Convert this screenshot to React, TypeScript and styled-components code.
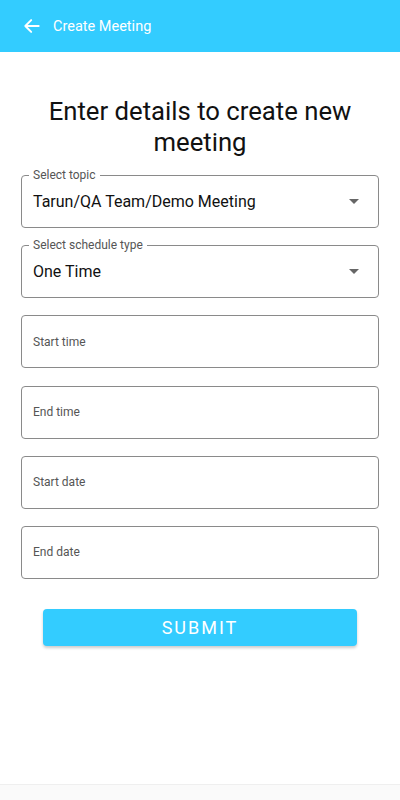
import React from "react";
import styled, { createGlobalStyle } from "styled-components";

const Global = createGlobalStyle`
  html, body { margin: 0; padding: 0; background: #fafafa; }
  body { font-family: Roboto, "Noto Sans", sans-serif; }
  * { box-sizing: border-box; }
`;

const Screen = styled.div`
  width: 400px;
  height: 800px;
  display: flex;
  flex-direction: column;
  background: #fafafa;
`;

const Header = styled.header`
  height: 52px;
  background: #33ccff;
  display: flex;
  align-items: center;
  padding-left: 22px;
  gap: 11px;
  color: #fff;
  font-size: 14.5px;
`;

const Body = styled.main`
  height: 733px;
  background: #fff;
  border-bottom: 1px solid #efefef;
  display: flex;
  flex-direction: column;
  align-items: center;
  padding: 44px 21px 0;
`;

const Title = styled.h1`
  margin: 0 0 17px;
  font-weight: 400;
  font-size: 25.7px;
  line-height: 31px;
  color: #111;
  text-align: center;
  width: 320px;
`;

const Fields = styled.div`
  width: 358px;
  display: flex;
  flex-direction: column;
  gap: 17.2px;
`;

const Field = styled.div`
  position: relative;
  height: 53px;
  border: 1px solid #8a8a8a;
  border-radius: 4px;
  display: flex;
  align-items: center;
  padding: 0 11px;
`;

const Legend = styled.span`
  position: absolute;
  top: -8px;
  left: 7px;
  padding: 0 4px;
  background: #fff;
  font-size: 12px;
  line-height: 14px;
  color: #555;
`;

const Value = styled.span`
  flex: 1;
  font-size: 16px;
  color: #111;
`;

const Placeholder = styled.span`
  font-size: 12px;
  color: #555;
`;

const Caret = styled.span`
  width: 0;
  height: 0;
  border-left: 5px solid transparent;
  border-right: 5px solid transparent;
  border-top: 5px solid #666;
  margin-right: 8px;
`;

const Submit = styled.button`
  margin-top: 30px;
  width: 314px;
  height: 37px;
  border: none;
  border-radius: 4px;
  background: #33ccff;
  color: #fff;
  font-family: Roboto, sans-serif;
  font-size: 18px;
  letter-spacing: 2px;
  box-shadow: 0 2px 3px rgba(0, 0, 0, 0.2);
`;

const selects = [
  { label: "Select topic", value: "Tarun/QA Team/Demo Meeting" },
  { label: "Select schedule type", value: "One Time" },
];
const inputs = ["Start time", "End time", "Start date", "End date"];

export default function App() {
  return (
    <Screen>
      <Global />
      <Header>
        <svg width="20" height="20" viewBox="0 0 24 24" fill="none" stroke="#fff" strokeWidth="2.4" strokeLinecap="round" strokeLinejoin="round">
          <path d="M20 12H4M11 5l-7 7 7 7" />
        </svg>
        Create Meeting
      </Header>
      <Body>
        <Title>Enter details to create new meeting</Title>
        <Fields>
          {selects.map((s) => (
            <Field key={s.label}>
              <Legend>{s.label}</Legend>
              <Value>{s.value}</Value>
              <Caret />
            </Field>
          ))}
          {inputs.map((p) => (
            <Field key={p}>
              <Placeholder>{p}</Placeholder>
            </Field>
          ))}
        </Fields>
        <Submit>SUBMIT</Submit>
      </Body>
    </Screen>
  );
}
